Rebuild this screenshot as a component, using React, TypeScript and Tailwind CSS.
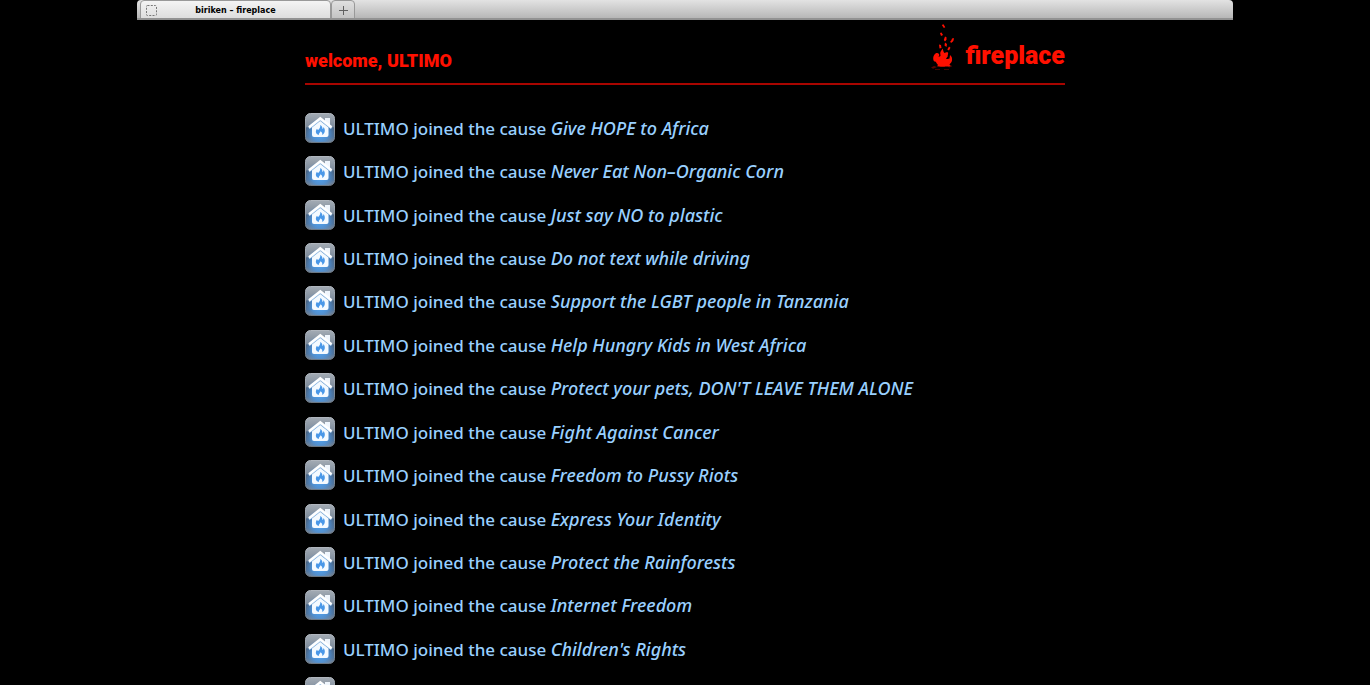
const CAUSES = [
  "Give HOPE to Africa",
  "Never Eat Non–Organic Corn",
  "Just say NO to plastic",
  "Do not text while driving",
  "Support the LGBT people in Tanzania",
  "Help Hungry Kids in West Africa",
  "Protect your pets, DON'T LEAVE THEM ALONE",
  "Fight Against Cancer",
  "Freedom to Pussy Riots",
  "Express Your Identity",
  "Protect the Rainforests",
  "Internet Freedom",
  "Children's Rights",
];

function HomeIcon() {
  return (
    <svg viewBox="0 0 30 30" className="size-[30px] shrink-0" aria-hidden="true">
      <defs>
        <linearGradient id="tile" x1="0" y1="0" x2="0" y2="1">
          <stop offset="0" stopColor="#a3abb4" />
          <stop offset="0.45" stopColor="#7d8b9b" />
          <stop offset="0.5" stopColor="#4a6482" />
          <stop offset="0.8" stopColor="#50749c" />
          <stop offset="1" stopColor="#78889a" />
        </linearGradient>
        <radialGradient id="glow" cx="0.5" cy="0.66" r="0.5">
          <stop offset="0" stopColor="#5aaefa" />
          <stop offset="0.6" stopColor="#4c98e4" stopOpacity="0.75" />
          <stop offset="1" stopColor="#4c8fd8" stopOpacity="0" />
        </radialGradient>
        <linearGradient id="rim" x1="0" y1="0" x2="0" y2="1">
          <stop offset="0" stopColor="#b0b6be" />
          <stop offset="1" stopColor="#6c7782" />
        </linearGradient>
      </defs>
      <rect x="0.5" y="0.5" width="29" height="29" rx="5" fill="url(#tile)" stroke="url(#rim)" />
      <rect x="1" y="1" width="28" height="28" rx="4.500" fill="url(#glow)" />
      <path d="M20 5h5v8.500l-5-4z" fill="#f0f6fd" />
      <path d="M7 14.500 15.200 8l8.300 6.500v7.500q0 2-2 2H9q-2 0-2-2z" fill="#f4faff" />
      <path d="M4 15.300 15.300 6.200l11.200 9.100" fill="none" stroke="#b9d9f7" strokeWidth="2" />
      <path d="M4 14.300 15.300 5.200l11.200 9.100" fill="none" stroke="#ffffff" strokeWidth="2.400" />
      <path
        d="M15.200 12c1.800 1 2.300 2.500 2.300 4 .7-.4 1-1.200 1-2 2 2.500 2 6-1.300 8 .5-1.700-.4-3-1.700-3.800-.2 1.300-2.200 2.200-1.600 3.900-3.700-1-3.600-4.400-1.900-6.300.1.700.5 1.100 1.100 1.300 1.500-1.300 2.500-3 2.100-5.100z"
        fill="#4a98e8"
      />
    </svg>
  );
}

function FlameLogo() {
  return (
    <svg viewBox="0 0 26 48" className="h-12 w-[26px] shrink-0" fill="#ff1000" aria-hidden="true">
      <path d="M4.500 29.500c2-1.200 4 0 3.800 1.800L7.500 33l2-1-.3-3c.3-2 1.500-2.500 2.300-4.500 1 1.500.5 3 2 4.500 1 0 2-1 3.500-.5.500 1.500-.5 2.500-.3 4L15 34.500c1 .8 2.500.5 3.500 0l.5-3.500c2 1.500 2.300 3.500 2 5.500-.3 2-1.500 2.500-2.500 4l1 1.500c-3 1.200-4 0-6 .8-2-.3-4.500.3-7.500-.5L7 41c-1-1-1.500-2-2.200-3.200-1.800 0-2.600-1.300-2.600-3.300 0-2 .8-4 2.300-5z" />
      <path d="M10.800 1 12.500.3l1.800 2.900-1.500.8zM9 9l1.500-.5L12 11l-2 1zM14 12.500l1.500.8v2.400L14 17.500l-1.200-1.500zM21 14.500l1.800-.5c.3 2.200-.6 4-2.800 5l-.8-1.600q1.500-1 1.800-2.900zM8 20.500l2 .5.500 3-2 .5zM14 18.500l2 1.500-.5 3-2-1.500zM18 22.500l1.500 1.300-1.500 2.700-1.700-1z" />
      <path d="M0 43.500 3 42l3 1-4 1.800zM17 42l3-1 1 1.500-3 1zM4 45h5v.8H4zM13 45h5v.8h-5z" opacity="0.35" />
    </svg>
  );
}

function TabBar() {
  return (
    <div className="flex h-5 overflow-hidden rounded-t border-b-2 border-[#929292] bg-linear-to-b from-[#e3e3e3] to-[#b7b7b7] pl-[3px]">
      <button
        type="button"
        className="flex h-[19px] w-[191px] items-center rounded-t border border-[#999999] bg-linear-to-b from-[#f4f4f4] to-[#dedede] pt-px pl-[5px] font-['DejaVu_Sans',sans-serif] text-[8px] font-bold text-black"
      >
        <svg viewBox="0 0 11 11" className="size-[11px]" fill="none" stroke="#777777" aria-hidden="true">
          <rect x="0.5" y="0.5" width="10" height="10" rx="1" strokeDasharray="2 1.3" />
        </svg>
        <span className="flex-1 pt-px pr-4 text-center">biriken – fireplace</span>
      </button>
      <button
        type="button"
        aria-label="New tab"
        className="flex h-[19px] w-6 items-center justify-center rounded-t border border-[#999999] bg-linear-to-b from-[#e0e0e0] to-[#c4c4c4] pt-px"
      >
        <svg viewBox="0 0 9 9" className="size-[9px]" stroke="#606060" aria-hidden="true">
          <path d="M4.500 0v9M0 4.500h9" />
        </svg>
      </button>
    </div>
  );
}

export default function App() {
  return (
    <div className="h-screen overflow-hidden bg-black">
      <div className="mx-auto w-4/5">
        <TabBar />
        <main className="px-[168px]">
          <header className="flex h-[65px] justify-between border-b-2 border-[#a80500] font-['Roboto',sans-serif] font-black text-[#ff1000]">
            <h1 className="pt-[29px] text-[18px] leading-6">welcome, ULTIMO</h1>
            <a href="#" className="flex gap-2 pt-1">
              <FlameLogo />
              <span className="pt-4 text-[25px] leading-8">fireplace</span>
            </a>
          </header>
          <ul className="mt-[21px] grid h-[608px] auto-rows-fr font-['Noto_Sans',sans-serif] text-[17px] leading-7 font-medium text-[#99d0ff]">
            {CAUSES.map((cause) => (
              <li key={cause} className="flex items-center gap-2">
                <HomeIcon />
                <span className="pt-px whitespace-nowrap">
                  ULTIMO joined the cause <em className="text-[18px]">{cause}</em>
                </span>
              </li>
            ))}
            <li className="flex items-center">
              <HomeIcon />
            </li>
          </ul>
        </main>
      </div>
    </div>
  );
}
